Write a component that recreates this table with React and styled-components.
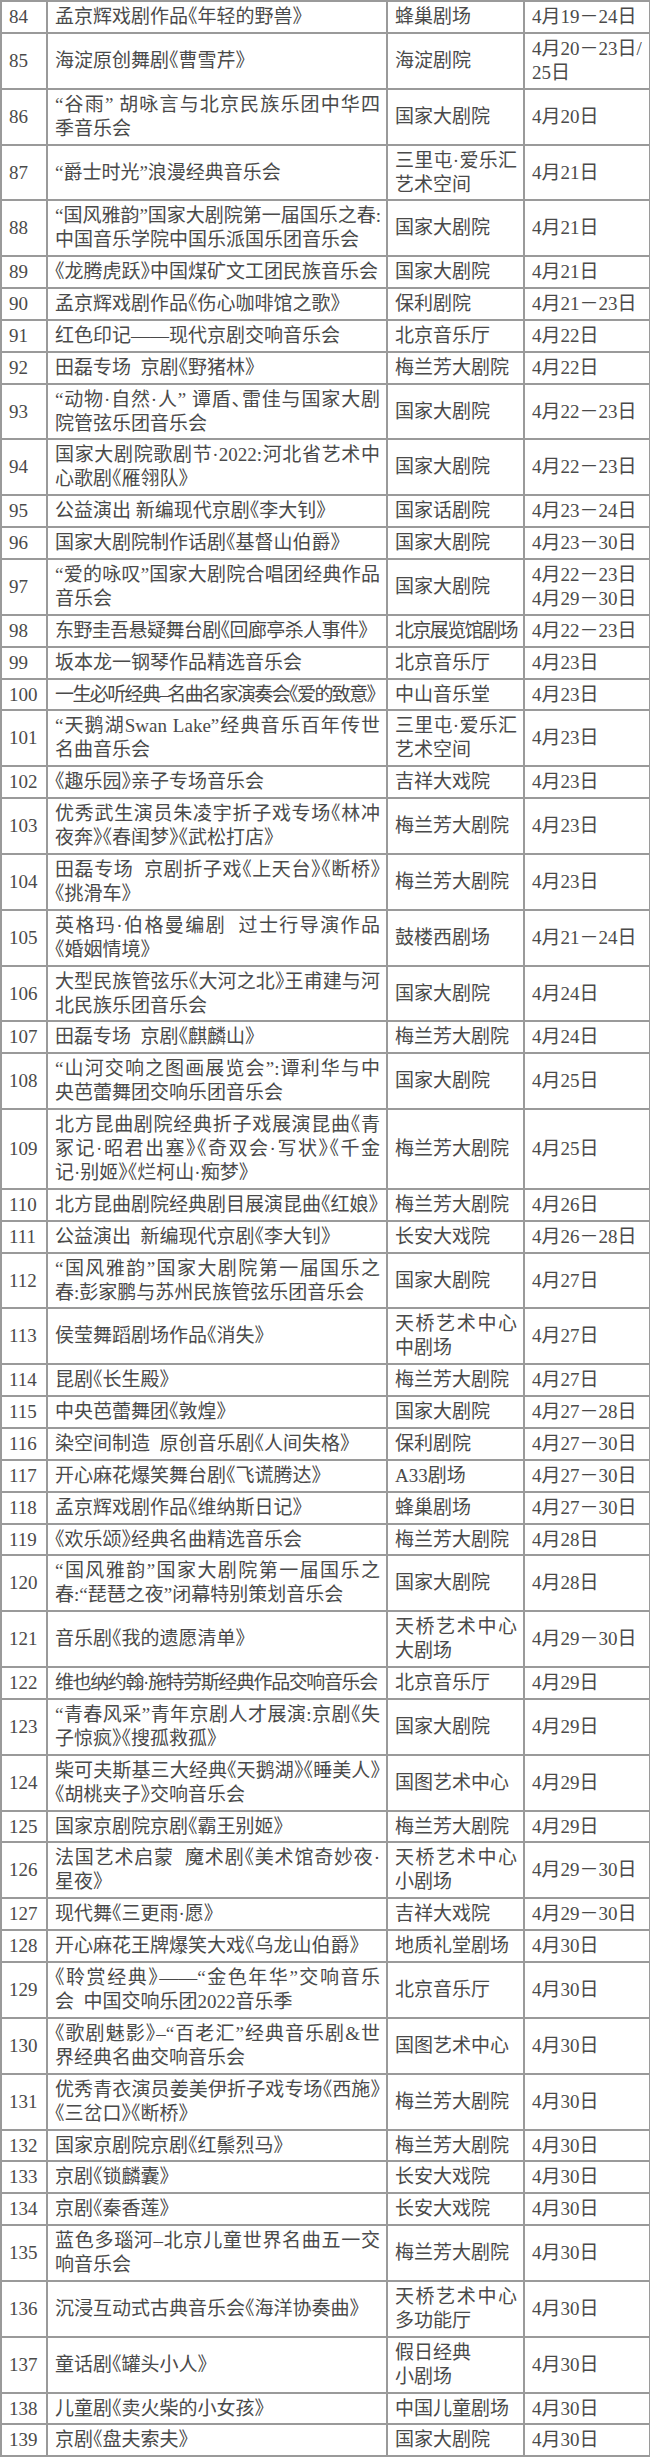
import React from "react";
import styled, { createGlobalStyle } from "styled-components";

const rows = [
  { n: 84, t: ["孟京辉戏剧作品《年轻的野兽》"], v: ["蜂巢剧场"], d: ["4月19－24日"] },
  { n: 85, t: ["海淀原创舞剧《曹雪芹》"], v: ["海淀剧院"], d: ["4月20－23日/", "25日"] },
  { n: 86, t: ["“谷雨” 胡咏言与北京民族乐团中华四", "季音乐会"], v: ["国家大剧院"], d: ["4月20日"] },
  { n: 87, t: ["“爵士时光”浪漫经典音乐会"], v: ["三里屯·爱乐汇", "艺术空间"], d: ["4月21日"] },
  { n: 88, t: ["“国风雅韵”国家大剧院第一届国乐之春:", "中国音乐学院中国乐派国乐团音乐会"], v: ["国家大剧院"], d: ["4月21日"] },
  { n: 89, t: ["《龙腾虎跃》中国煤矿文工团民族音乐会"], v: ["国家大剧院"], d: ["4月21日"] },
  { n: 90, t: ["孟京辉戏剧作品《伤心咖啡馆之歌》"], v: ["保利剧院"], d: ["4月21－23日"] },
  { n: 91, t: ["红色印记——现代京剧交响音乐会"], v: ["北京音乐厅"], d: ["4月22日"] },
  { n: 92, t: ["田磊专场  京剧《野猪林》"], v: ["梅兰芳大剧院"], d: ["4月22日"] },
  { n: 93, t: ["“动物·自然·人” 谭盾、雷佳与国家大剧", "院管弦乐团音乐会"], v: ["国家大剧院"], d: ["4月22－23日"] },
  { n: 94, t: ["国家大剧院歌剧节·2022:河北省艺术中", "心歌剧《雁翎队》"], v: ["国家大剧院"], d: ["4月22－23日"] },
  { n: 95, t: ["公益演出 新编现代京剧《李大钊》"], v: ["国家话剧院"], d: ["4月23－24日"] },
  { n: 96, t: ["国家大剧院制作话剧《基督山伯爵》"], v: ["国家大剧院"], d: ["4月23－30日"] },
  { n: 97, t: ["“爱的咏叹”国家大剧院合唱团经典作品", "音乐会"], v: ["国家大剧院"], d: ["4月22－23日", "4月29－30日"] },
  { n: 98, t: ["东野圭吾悬疑舞台剧《回廊亭杀人事件》"], v: ["北京展览馆剧场"], d: ["4月22－23日"], ts: -0.6, vs: -1.6 },
  { n: 99, t: ["坂本龙一钢琴作品精选音乐会"], v: ["北京音乐厅"], d: ["4月23日"] },
  { n: 100, t: ["一生必听经典–名曲名家演奏会《爱的致意》"], v: ["中山音乐堂"], d: ["4月23日"], ts: -1.6 },
  { n: 101, t: ["“天鹅湖Swan Lake”经典音乐百年传世", "名曲音乐会"], v: ["三里屯·爱乐汇", "艺术空间"], d: ["4月23日"] },
  { n: 102, t: ["《趣乐园》亲子专场音乐会"], v: ["吉祥大戏院"], d: ["4月23日"] },
  { n: 103, t: ["优秀武生演员朱凌宇折子戏专场《林冲", "夜奔》《春闺梦》《武松打店》"], v: ["梅兰芳大剧院"], d: ["4月23日"] },
  { n: 104, t: ["田磊专场  京剧折子戏《上天台》《断桥》", "《挑滑车》"], v: ["梅兰芳大剧院"], d: ["4月23日"] },
  { n: 105, t: ["英格玛·伯格曼编剧  过士行导演作品", "《婚姻情境》"], v: ["鼓楼西剧场"], d: ["4月21－24日"] },
  { n: 106, t: ["大型民族管弦乐《大河之北》王甫建与河", "北民族乐团音乐会"], v: ["国家大剧院"], d: ["4月24日"] },
  { n: 107, t: ["田磊专场  京剧《麒麟山》"], v: ["梅兰芳大剧院"], d: ["4月24日"] },
  { n: 108, t: ["“山河交响之图画展览会”:谭利华与中", "央芭蕾舞团交响乐团音乐会"], v: ["国家大剧院"], d: ["4月25日"] },
  { n: 109, t: ["北方昆曲剧院经典折子戏展演昆曲《青", "冢记·昭君出塞》《奇双会·写状》《千金", "记·别姬》《烂柯山·痴梦》"], v: ["梅兰芳大剧院"], d: ["4月25日"] },
  { n: 110, t: ["北方昆曲剧院经典剧目展演昆曲《红娘》"], v: ["梅兰芳大剧院"], d: ["4月26日"] },
  { n: 111, t: ["公益演出  新编现代京剧《李大钊》"], v: ["长安大戏院"], d: ["4月26－28日"] },
  { n: 112, t: ["“国风雅韵”国家大剧院第一届国乐之", "春:彭家鹏与苏州民族管弦乐团音乐会"], v: ["国家大剧院"], d: ["4月27日"] },
  { n: 113, t: ["侯莹舞蹈剧场作品《消失》"], v: ["天桥艺术中心", "中剧场"], d: ["4月27日"] },
  { n: 114, t: ["昆剧《长生殿》"], v: ["梅兰芳大剧院"], d: ["4月27日"] },
  { n: 115, t: ["中央芭蕾舞团《敦煌》"], v: ["国家大剧院"], d: ["4月27－28日"] },
  { n: 116, t: ["染空间制造  原创音乐剧《人间失格》"], v: ["保利剧院"], d: ["4月27－30日"] },
  { n: 117, t: ["开心麻花爆笑舞台剧《飞谎腾达》"], v: ["A33剧场"], d: ["4月27－30日"] },
  { n: 118, t: ["孟京辉戏剧作品《维纳斯日记》"], v: ["蜂巢剧场"], d: ["4月27－30日"] },
  { n: 119, t: ["《欢乐颂》经典名曲精选音乐会"], v: ["梅兰芳大剧院"], d: ["4月28日"] },
  { n: 120, t: ["“国风雅韵”国家大剧院第一届国乐之", "春:“琵琶之夜”闭幕特别策划音乐会"], v: ["国家大剧院"], d: ["4月28日"] },
  { n: 121, t: ["音乐剧《我的遗愿清单》"], v: ["天桥艺术中心", "大剧场"], d: ["4月29－30日"] },
  { n: 122, t: ["维也纳约翰·施特劳斯经典作品交响音乐会"], v: ["北京音乐厅"], d: ["4月29日"], ts: -1.4 },
  { n: 123, t: ["“青春风采”青年京剧人才展演:京剧《失", "子惊疯》《搜孤救孤》"], v: ["国家大剧院"], d: ["4月29日"] },
  { n: 124, t: ["柴可夫斯基三大经典《天鹅湖》《睡美人》", "《胡桃夹子》交响音乐会"], v: ["国图艺术中心"], d: ["4月29日"] },
  { n: 125, t: ["国家京剧院京剧《霸王别姬》"], v: ["梅兰芳大剧院"], d: ["4月29日"] },
  { n: 126, t: ["法国艺术启蒙  魔术剧《美术馆奇妙夜·", "星夜》"], v: ["天桥艺术中心", "小剧场"], d: ["4月29－30日"] },
  { n: 127, t: ["现代舞《三更雨·愿》"], v: ["吉祥大戏院"], d: ["4月29－30日"] },
  { n: 128, t: ["开心麻花王牌爆笑大戏《乌龙山伯爵》"], v: ["地质礼堂剧场"], d: ["4月30日"] },
  { n: 129, t: ["《聆赏经典》——“金色年华”交响音乐", "会  中国交响乐团2022音乐季"], v: ["北京音乐厅"], d: ["4月30日"] },
  { n: 130, t: ["《歌剧魅影》–“百老汇”经典音乐剧&世", "界经典名曲交响音乐会"], v: ["国图艺术中心"], d: ["4月30日"] },
  { n: 131, t: ["优秀青衣演员姜美伊折子戏专场《西施》", "《三岔口》《断桥》"], v: ["梅兰芳大剧院"], d: ["4月30日"] },
  { n: 132, t: ["国家京剧院京剧《红鬃烈马》"], v: ["梅兰芳大剧院"], d: ["4月30日"] },
  { n: 133, t: ["京剧《锁麟囊》"], v: ["长安大戏院"], d: ["4月30日"] },
  { n: 134, t: ["京剧《秦香莲》"], v: ["长安大戏院"], d: ["4月30日"] },
  { n: 135, t: ["蓝色多瑙河–北京儿童世界名曲五一交", "响音乐会"], v: ["梅兰芳大剧院"], d: ["4月30日"] },
  { n: 136, t: ["沉浸互动式古典音乐会《海洋协奏曲》"], v: ["天桥艺术中心", "多功能厅"], d: ["4月30日"] },
  { n: 137, t: ["童话剧《罐头小人》"], v: ["假日经典", "小剧场"], d: ["4月30日"], vLoose: true },
  { n: 138, t: ["儿童剧《卖火柴的小女孩》"], v: ["中国儿童剧场"], d: ["4月30日"] },
  { n: 139, t: ["京剧《盘夫索夫》"], v: ["国家大剧院"], d: ["4月30日"] },
];

const columns = [46, 340, 137, 126];

const GlobalStyle = createGlobalStyle`
  html, body {
    margin: 0;
    padding: 0;
    background: #fff;
  }
`;

const Table = styled.table`
  width: 649px;
  table-layout: fixed;
  border-collapse: collapse;
  color: #4a4a4a;
  font-family: "Liberation Serif", "Noto Sans CJK SC", serif;
  font-size: 19px;
  line-height: 24px;
  font-feature-settings: "halt";
`;

const Col = styled.col`
  width: ${(p) => p.$w}px;
`;

const Cell = styled.td`
  border: 2px solid #9a9a9a;
  padding: 3px 6px 2.85px 7px;
  vertical-align: middle;
  white-space: pre;
`;

const Line = styled.div`
  text-align: ${(p) => (p.$fill ? "justify" : "left")};
  text-align-last: ${(p) => (p.$fill ? "justify" : "auto")};
  letter-spacing: ${(p) => p.$squeeze || 0}px;
`;

const Lines = ({ items, squeeze, loose }) =>
  items.map((text, i) => (
    <Line key={i} $fill={!loose && i < items.length - 1} $squeeze={squeeze}>
      {text}
    </Line>
  ));

export default function App() {
  return (
    <>
      <GlobalStyle />
      <Table>
        <colgroup>
          {columns.map((w, i) => (
            <Col key={i} $w={w} />
          ))}
        </colgroup>
        <tbody>
          {rows.map((r) => (
            <tr key={r.n}>
              <Cell>{r.n}</Cell>
              <Cell>
                <Lines items={r.t} squeeze={r.ts} />
              </Cell>
              <Cell>
                <Lines items={r.v} squeeze={r.vs} loose={r.vLoose} />
              </Cell>
              <Cell>
                <Lines items={r.d} loose />
              </Cell>
            </tr>
          ))}
        </tbody>
      </Table>
    </>
  );
}
